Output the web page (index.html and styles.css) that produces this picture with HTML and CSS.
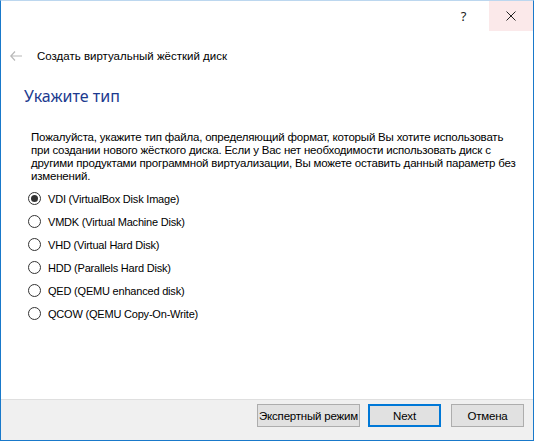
FILE: index.html
```html
<!DOCTYPE html>
<html lang="ru">
<head>
<meta charset="utf-8">
<title>Создать виртуальный жёсткий диск</title>
<link rel="stylesheet" href="styles.css">
</head>
<body>
<div class="window">
  <div class="titlebar">
    <div class="tb-btn help">?</div>
    <div class="tb-btn close">
      <svg width="10" height="10" viewBox="0 0 10 10"><path d="M0.5 0.5L9.5 9.5M9.5 0.5L0.5 9.5" stroke="#222" stroke-width="1" fill="none"/></svg>
    </div>
  </div>
  <div class="header">
    <svg class="back" width="12" height="10" viewBox="0 0 12 10"><path d="M5 0.5L0.8 5L5 9.5M0.8 5H12" stroke="#b8b8b8" stroke-width="1.2" fill="none"/></svg>
    <span class="title">Создать виртуальный жёсткий диск</span>
  </div>
  <div class="content">
    <h1 class="heading">Укажите тип</h1>
    <p class="desc">Пожалуйста, укажите тип файла, определяющий формат, который Вы хотите использовать<br>при создании нового жёсткого диска. Если у Вас нет необходимости использовать диск с<br>другими продуктами программной виртуализации, Вы можете оставить данный параметр без<br>изменений.</p>
    <ul class="options">
      <li class="option checked"><span class="radio"></span>VDI (VirtualBox Disk Image)</li>
      <li class="option"><span class="radio"></span>VMDK (Virtual Machine Disk)</li>
      <li class="option"><span class="radio"></span>VHD (Virtual Hard Disk)</li>
      <li class="option"><span class="radio"></span>HDD (Parallels Hard Disk)</li>
      <li class="option"><span class="radio"></span>QED (QEMU enhanced disk)</li>
      <li class="option"><span class="radio"></span>QCOW (QEMU Copy-On-Write)</li>
    </ul>
  </div>
  <div class="footer">
    <button class="btn expert">Экспертный режим</button>
    <button class="btn default">Next</button>
    <button class="btn cancel">Отмена</button>
  </div>
</div>
</body>
</html>
```

FILE: styles.css
```css
* { box-sizing: border-box; }
html, body { margin: 0; padding: 0; background: #fff; }
body {
  font-family: "Liberation Sans", Arial, sans-serif;
  font-size: 11.5px;
  color: #000;
}
.window {
  width: 534px;
  height: 441px;
  border: 1px solid #1979ca;
  border-top-color: #bcd7ef;
  display: flex;
  flex-direction: column;
  background: #fff;
}
.titlebar {
  height: 30px;
  display: flex;
  justify-content: flex-end;
}
.tb-btn {
  width: 45px;
  height: 30px;
  display: flex;
  align-items: center;
  justify-content: center;
}
.help {
  font-family: "Noto Sans", sans-serif;
  font-size: 13px;
  color: #222;
  padding-right: 6px;
}
.close {
  width: 44px;
  background: #fbe9ea;
}
.header {
  height: 48px;
  display: flex;
  align-items: center;
  padding-left: 9px;
  padding-top: 2px;
}
.back { margin-right: 15px; }
.title { font-size: 11.5px; }
.content {
  flex: 1;
  padding-left: 23px;
  padding-right: 10px;
}
.heading {
  margin: 6px 0 0 0;
  font-family: "Noto Sans", sans-serif;
  font-size: 16px;
  font-weight: normal;
  color: #1c3a8f;
  line-height: 22px;
}
.desc {
  margin: 24px 0 0 7px;
  font-size: 11.5px;
  line-height: 13px;
  letter-spacing: -0.2px;
  white-space: nowrap;
}
.options {
  list-style: none;
  margin: 4px 0 0 4px;
  padding: 0;
}
.option {
  display: flex;
  align-items: center;
  height: 23px;
  font-size: 11px;
  letter-spacing: -0.2px;
}
.radio {
  width: 13px;
  height: 13px;
  border: 1px solid #333;
  border-radius: 50%;
  margin-right: 7px;
  display: flex;
  align-items: center;
  justify-content: center;
  background: #fff;
}
.checked .radio::after {
  content: "";
  width: 7px;
  height: 7px;
  border-radius: 50%;
  background: #333;
}
.footer {
  height: 41px;
  border-top: 1px solid #dfdfdf;
  background: #f0f0f0;
  display: flex;
  justify-content: flex-end;
  align-items: flex-start;
  padding: 4px 9px 0 0;
  gap: 8px;
}
.btn {
  font-family: "Liberation Sans", Arial, sans-serif;
  font-size: 11.5px;
  letter-spacing: -0.2px;
  height: 23px;
  padding: 0;
  white-space: nowrap;
  background: #e1e1e1;
  border: 1px solid #adadad;
  color: #000;
}
.expert { width: 103px; }
.default { width: 73px; border: 2px solid #0078d7; }
.cancel { width: 73px; margin-left: 2px; }
```
